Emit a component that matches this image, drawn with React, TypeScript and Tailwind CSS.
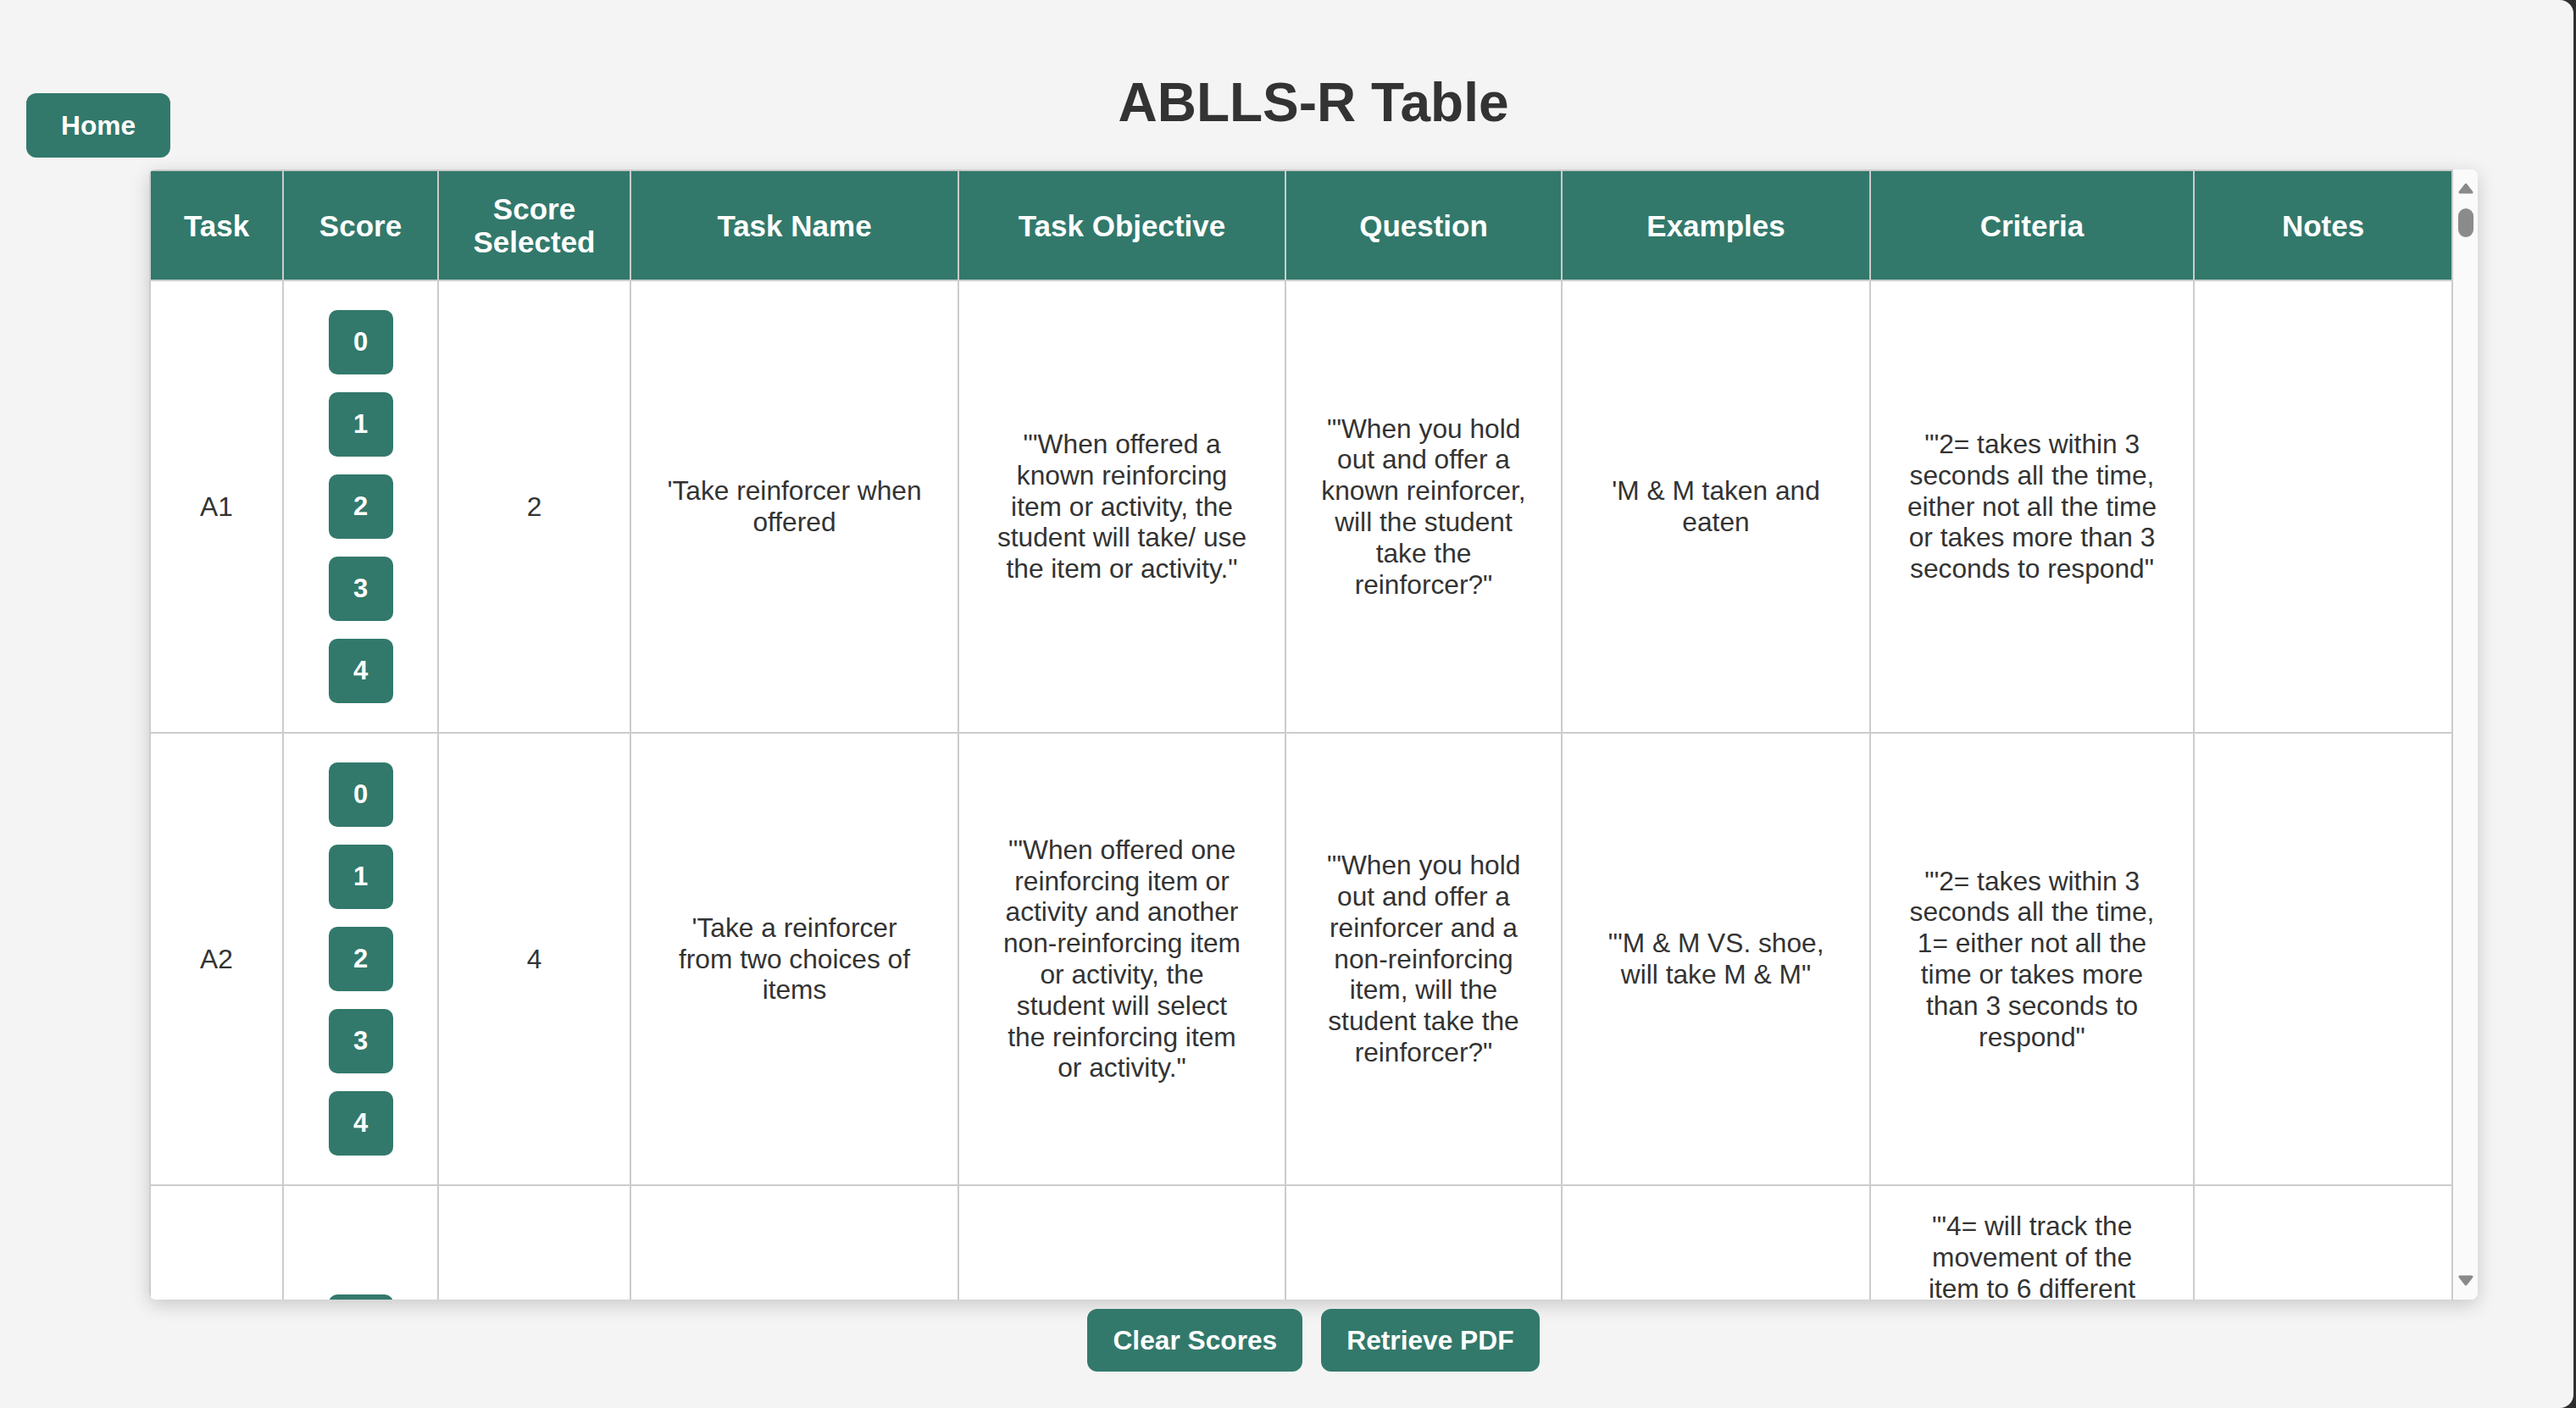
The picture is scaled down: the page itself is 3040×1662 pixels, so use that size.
import React from "react";

type Row = {
  task: string;
  selected: string;
  name: string;
  objective: string;
  question: string;
  examples: string;
  criteria: string;
};

const rows: Row[] = [
  {
    task: "A1",
    selected: "2",
    name: "'Take reinforcer when offered",
    objective: `'"When offered a known reinforcing item or activity, the student will take/ use the item or activity."`,
    question: `'"When you hold out and offer a known reinforcer, will the student take the reinforcer?"`,
    examples: "'M & M taken and eaten",
    criteria: `'"2= takes within 3 seconds all the time, either not all the time or takes more than 3 seconds to respond"`,
  },
  {
    task: "A2",
    selected: "4",
    name: "'Take a reinforcer from two choices of items",
    objective: `'"When offered one reinforcing item or activity and another non-reinforcing item or activity, the student will select the reinforcing item or activity."`,
    question: `'"When you hold out and offer a reinforcer and a non-reinforcing item, will the student take the reinforcer?"`,
    examples: `'"M & M VS. shoe, will take M & M"`,
    criteria: `'"2= takes within 3 seconds all the time, 1= either not all the time or takes more than 3 seconds to respond"`,
  },
  {
    task: "A3",
    selected: "",
    name: "'Visually track a moving reinforcer",
    objective: `'"The student will visually track the movement of a reinforcing item as it is moved to different positions."`,
    question: `'"When you move a reinforcing item in front of the student, will the student follow it with his eyes?"`,
    examples: `'"Follows a toy car moved left to right"`,
    criteria: `'"4= will track the movement of the item to 6 different positions, 3= will track the movement of the item to 4 or 5 different positions, 2= will track the movement of the item to 2 or 3 different positions, 1= will track the movement of the item to only 1 position, 0= does not look at or follow the item at all in any of the positions"`,
  },
];

const headers = [
  "Task",
  "Score",
  "Score Selected",
  "Task Name",
  "Task Objective",
  "Question",
  "Examples",
  "Criteria",
  "Notes",
];

function Triangle({ down }: { down?: boolean }) {
  return (
    <svg width="18" height="13" viewBox="0 0 18 13">
      <polygon
        points={down ? "2,2 16,2 9,11" : "9,2 16,11 2,11"}
        fill="#8a8a8a"
        stroke="#8a8a8a"
        strokeWidth="3"
        strokeLinejoin="round"
      />
    </svg>
  );
}

export default function App() {
  return (
    <div className="h-[1662px] w-full bg-[#2e2e2e] font-['Liberation_Sans',Arial,sans-serif] text-[#333]">
      <div className="mr-[3px] flex h-full rounded-r-[16px] bg-[#f4f4f4]">
        {/* left gutter with the home link */}
        <div className="w-[176px] shrink-0 pl-[31px] pt-[110px]">
          <button className="rounded-[12px] bg-[#32796b] px-[41px] py-[20px] text-[31.7px] font-bold leading-[36px] text-white">
            Home
          </button>
        </div>

        <div className="flex w-[2748px] shrink-0 flex-col items-center pt-[84px]">
          <h1 className="mb-[42px] text-[64px] font-bold leading-[74px] text-[#333]">
            ABLLS-R Table
          </h1>

          <div className="flex h-[1334px] w-full overflow-hidden rounded-[8px] bg-white shadow-[0_6px_22px_rgba(0,0,0,0.18)]">
            <div className="flex-1 overflow-hidden">
              <table className="w-[2717px] table-fixed border-collapse text-center text-[31.7px] leading-[36.8px]">
                <colgroup>
                  <col className="w-[157px]" />
                  <col className="w-[183px]" />
                  <col className="w-[227px]" />
                  <col className="w-[387px]" />
                  <col className="w-[386px]" />
                  <col className="w-[326px]" />
                  <col className="w-[364px]" />
                  <col className="w-[382px]" />
                  <col className="w-[305px]" />
                </colgroup>
                <thead>
                  <tr>
                    {headers.map((h) => (
                      <th
                        key={h}
                        className="border-2 border-[#cccccc] bg-[#32796b] px-[39px] py-[25px] text-[35px] font-bold leading-[39px] text-white"
                      >
                        {h}
                      </th>
                    ))}
                  </tr>
                </thead>
                <tbody>
                  {rows.map((r) => (
                    <tr key={r.task}>
                      <td className="border-2 border-[#cccccc] px-[39px] py-[29px]">{r.task}</td>
                      <td className="border-2 border-[#cccccc] px-[39px] py-[29px]">
                        <div className="flex flex-col items-center gap-[21px] py-[5px]">
                          {[0, 1, 2, 3, 4].map((n) => (
                            <button
                              key={n}
                              className="flex h-[76px] w-[76px] items-center justify-center rounded-[10px] bg-[#32796b] text-[31px] font-bold text-white"
                            >
                              {n}
                            </button>
                          ))}
                        </div>
                      </td>
                      <td className="border-2 border-[#cccccc] px-[39px] py-[29px]">{r.selected}</td>
                      <td className="border-2 border-[#cccccc] px-[39px] py-[29px]">{r.name}</td>
                      <td className="border-2 border-[#cccccc] px-[42px] py-[29px]">{r.objective}</td>
                      <td className="border-2 border-[#cccccc] px-[39px] py-[29px]">{r.question}</td>
                      <td className="border-2 border-[#cccccc] px-[39px] py-[29px]">{r.examples}</td>
                      <td className="border-2 border-[#cccccc] px-[39px] py-[29px]">{r.criteria}</td>
                      <td className="border-2 border-[#cccccc] px-[39px] py-[29px]"></td>
                    </tr>
                  ))}
                </tbody>
              </table>
            </div>

            {/* scrollbar */}
            <div className="flex w-[29px] shrink-0 flex-col items-center bg-[#fafafa] pb-[16px] pt-[16px]">
              <Triangle />
              <div className="mt-[17px] h-[34px] w-[18px] rounded-full bg-[#8b8b8b]" />
              <div className="flex-1" />
              <Triangle down />
            </div>
          </div>

          <div className="mt-[11px] flex gap-[22px]">
            <button className="rounded-[12px] bg-[#32796b] px-[30px] py-[19px] text-[31.7px] font-bold leading-[36px] text-white">
              Clear Scores
            </button>
            <button className="rounded-[12px] bg-[#32796b] px-[30px] py-[19px] text-[31.7px] font-bold leading-[36px] text-white">
              Retrieve PDF
            </button>
          </div>
        </div>
      </div>
    </div>
  );
}
